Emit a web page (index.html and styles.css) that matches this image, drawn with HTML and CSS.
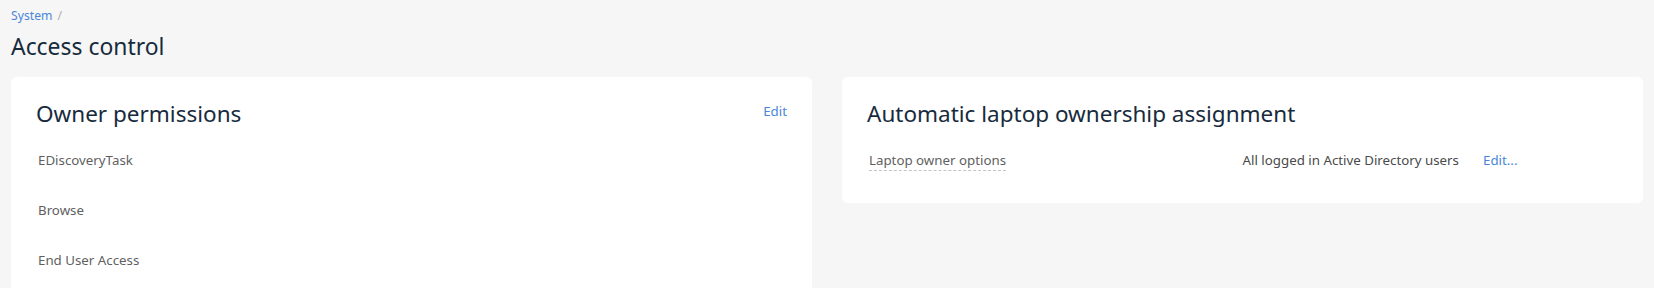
FILE: index.html
```html
<!DOCTYPE html>
<html>
  <head>
    <title>Access control</title>
    <meta charset="utf-8">
    <link rel="stylesheet" href="styles.css">
  </head>
<body>
  <header class="page-head">
    <nav class="crumbs">
      <a href="#">System</a>
      <span class="sep">/</span>
    </nav>
    <h1>Access control</h1>
  </header>

  <main class="columns">
    <section class="card">
      <div class="card-head">
        <h2>Owner permissions</h2>
        <a class="link" href="#">Edit</a>
      </div>
      <ul class="perm-list">
        <li>EDiscoveryTask</li>
        <li>Browse</li>
        <li>End User Access</li>
      </ul>
    </section>

    <section class="card card-short">
      <div class="card-head">
        <h2>Automatic laptop ownership assignment</h2>
      </div>
      <div class="setting-row">
        <span class="setting-label">Laptop owner options</span>
        <div class="setting-value">
          <span>All logged in Active Directory users</span>
          <a class="link" href="#">Edit...</a>
        </div>
      </div>
    </section>
  </main>
</body>
</html>
```

FILE: styles.css
```css
body {
  margin: 0;
  padding: 0 11px;
  background: #f6f6f6;
  color: #172b3d;
  font-family: "Segoe UI", "Noto Sans", "Open Sans", sans-serif;
  overflow: hidden;
}

a {
  text-decoration: none;
}

.page-head {
  padding-top: 6px;
}

.crumbs {
  font-size: 12.2px;
  line-height: 20px;
}

.crumbs a {
  color: #4a86d8;
}

.crumbs .sep {
  color: #b0b0b0;
  margin-left: 2px;
}

.page-head h1 {
  margin: 5px 0 0;
  font-size: 22.9px;
  font-weight: normal;
  line-height: 32px;
}

.columns {
  display: grid;
  grid-template-columns: 1fr 1fr;
  gap: 30px;
  align-items: start;
  margin-top: 14px;
}

.card {
  background: white;
  border-radius: 6px;
  padding: 21px 25px 40px;
}

.card-short {
  padding-bottom: 32px;
}

.card-head {
  display: flex;
  justify-content: space-between;
  align-items: flex-start;
}

.card-head h2 {
  margin: 0;
  font-size: 22.5px;
  font-weight: normal;
  line-height: 32px;
}

.link {
  color: #4a86d8;
  font-size: 13.3px;
  line-height: 20px;
  margin-top: 3px;
}

.perm-list {
  list-style: none;
  margin: 20px 0 0;
  padding: 0 0 0 2px;
  font-size: 13.3px;
  color: #5f5f5f;
}

.perm-list li {
  line-height: 20px;
  margin-bottom: 30px;
}

.setting-row {
  display: grid;
  grid-template-columns: 1fr 1fr;
  margin-top: 20px;
  font-size: 13.3px;
  line-height: 20px;
  color: #4a4a4a;
}

.setting-label {
  justify-self: start;
  margin-left: 2px;
  color: #5f5f5f;
  border-bottom: 1px dashed #c4c4c4;
}

.setting-value {
  display: flex;
  gap: 24px;
}

.setting-value .link {
  margin-top: 0;
}
```
